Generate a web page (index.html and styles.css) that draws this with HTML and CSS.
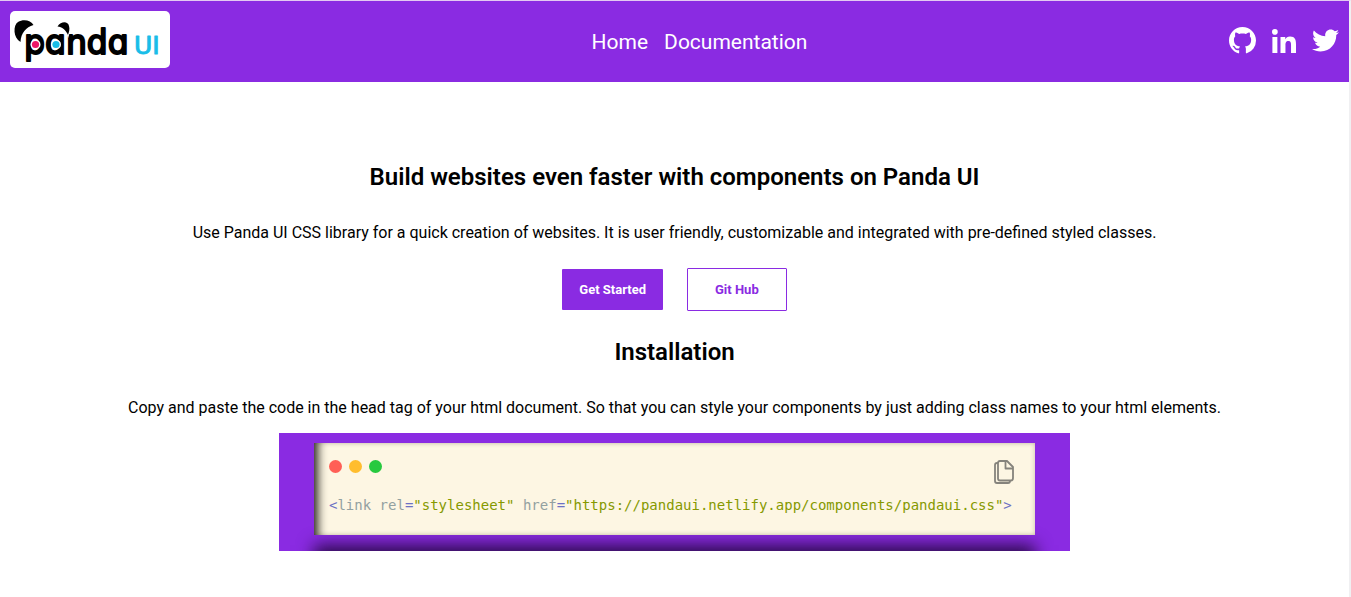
FILE: index.html
```html
<!DOCTYPE html>
<html lang="en">
<head>
<meta charset="utf-8">
<meta name="viewport" content="width=device-width, initial-scale=1">
<title>Panda UI</title>
<link rel="stylesheet" href="styles.css">
</head>
<body>
<header class="navbar">
  <a class="logo" href="#" aria-label="Panda UI">
    <svg class="logo-art" viewBox="0 0 160 57" aria-hidden="true">
      <text class="logo-word" x="14" y="43">pɑndɑ</text>
      <text class="logo-suffix" x="124" y="43">UI</text>
      <g stroke="#fff" stroke-width="2" paint-order="stroke">
        <path d="M10.500 31C3 27 3 14 8 11C13 8 21 9 23.500 14C16 16 11 22 10.500 31Z"/>
        <path d="M47.500 15.500C51 10 58 10 59 15C60 18 59 21 58 24C56 19 52 16 47.500 15.500Z"/>
      </g>
      <circle cx="25.500" cy="33.500" r="5" fill="#fff"/>
      <circle cx="25.500" cy="33.500" r="3.600" fill="#ed1566"/>
      <circle cx="46" cy="33.500" r="5" fill="#fff"/>
      <circle cx="46" cy="33.500" r="3.600" fill="#18bde8"/>
    </svg>
  </a>
  <nav class="nav-links">
    <a href="#">Home</a>
    <a href="#docs">Documentation</a>
  </nav>
  <div class="social">
    <a href="#github" aria-label="GitHub"><svg class="icon-github" viewBox="0 0 16 16"><path d="M8 0C3.580 0 0 3.580 0 8c0 3.540 2.290 6.530 5.470 7.590.4.070.55-.17.55-.38 0-.19-.01-.82-.01-1.490-2.010.37-2.530-.49-2.690-.94-.09-.23-.48-.94-.82-1.130-.28-.15-.68-.52-.01-.53.63-.01 1.080.58 1.230.82.72 1.210 1.870.87 2.330.66.07-.52.28-.87.51-1.070-1.780-.2-3.640-.89-3.640-3.950 0-.87.31-1.590.82-2.150-.08-.2-.36-1.020.08-2.120 0 0 .67-.21 2.200.82.640-.18 1.320-.27 2-.27s1.360.09 2 .27c1.530-1.040 2.200-.82 2.200-.82.44 1.100.16 1.920.08 2.120.51.56.82 1.270.82 2.150 0 3.070-1.870 3.750-3.650 3.950.29.25.54.73.54 1.480 0 1.070-.01 1.930-.01 2.200 0 .21.15.46.55.38A8.010 8.010 0 0 0 16 8c0-4.420-3.580-8-8-8z"/></svg></a>
    <a href="#linkedin" aria-label="LinkedIn"><svg class="icon-linkedin" viewBox="0 0 448 448"><path d="M100.280 448H7.400V148.900h92.880zM53.790 108.100C24.090 108.100 0 83.500 0 53.800a53.790 53.790 0 0 1 107.580 0c0 29.700-24.100 54.300-53.790 54.300zM447.900 448h-92.680V302.400c0-34.700-.7-79.200-48.290-79.200-48.290 0-55.690 37.700-55.690 76.700V448h-92.780V148.900h89.080v40.800h1.300c12.400-23.500 42.690-48.300 87.880-48.300 94 0 111.280 61.900 111.280 142.300V448z"/></svg></a>
    <a href="#twitter" aria-label="Twitter"><svg class="icon-twitter" viewBox="0 0 512 512"><path d="M459.370 151.716c.325 4.548.325 9.097.325 13.645 0 138.720-105.583 298.558-298.558 298.558-59.452 0-114.680-17.219-161.137-47.106 8.447.974 16.568 1.299 25.340 1.299 49.055 0 94.213-16.568 130.274-44.832-46.132-.975-84.792-31.188-98.112-72.772 6.498.974 12.995 1.624 19.818 1.624 9.421 0 18.843-1.300 27.614-3.573-48.081-9.747-84.143-51.980-84.143-102.985v-1.299c13.969 7.797 30.214 12.670 47.431 13.319-28.264-18.843-46.781-51.005-46.781-87.391 0-19.492 5.197-37.360 14.294-52.954 51.655 63.675 129.300 105.258 216.365 109.807-1.624-7.797-2.599-15.918-2.599-24.040 0-57.828 46.782-104.934 104.934-104.934 30.213 0 57.502 12.670 76.670 33.137 23.715-4.548 46.456-13.320 66.599-25.340-7.798 24.366-24.366 44.833-46.132 57.827 21.117-2.273 41.584-8.122 60.426-16.243-14.292 20.791-32.161 39.308-52.628 54.253z"/></svg></a>
  </div>
</header>
<main class="content">
  <h1 class="title">Build websites even faster with components on Panda UI</h1>
  <p class="text">Use Panda UI CSS library for a quick creation of websites. It is user friendly, customizable and integrated with pre-defined styled classes.</p>
  <div class="actions">
    <button class="btn btn-primary" type="button">Get Started</button>
    <button class="btn btn-outline" type="button">Git Hub</button>
  </div>
  <h2 class="title">Installation</h2>
  <p class="text">Copy and paste the code in the head tag of your html document. So that you can style your components by just adding class names to your html elements.</p>
  <div class="frame">
    <div class="window">
      <div class="window-bar">
        <div class="dots"><span class="dot red"></span><span class="dot yellow"></span><span class="dot green"></span></div>
        <button class="copy" type="button" aria-label="Copy code">
          <svg viewBox="0 0 20 24" width="20" height="24" fill="none" stroke="#85837c" stroke-width="1.800" stroke-linejoin="round"><path d="M4 3H3Q1 3 1 5V21Q1 23 3 23H14Q16 23 16 21"/><path d="M6 1H13L19 7V18Q19 20.500 17 20.500H6Q4 20.500 4 18.500V3Q4 1 6 1Z"/><path d="M11.500 1V8.500H19"/></svg>
        </button>
      </div>
      <pre class="code"><code><span class="punct">&lt;</span>link rel<span class="punct">=</span><span class="str">"stylesheet"</span> href<span class="punct">=</span><span class="str">"https://pandaui.netlify.app/components/pandaui.css"</span><span class="punct">&gt;</span></code></pre>
    </div>
  </div>
</main>
</body>
</html>
```
FILE: styles.css
```css
* { box-sizing: border-box; }
html { min-height: 100%; display: flex; flex-direction: column; }
body {
  margin: 0;
  flex: 1;
  font-family: Roboto, sans-serif;
  color: #000;
  background: #fff;
  border-top: 1px solid #e3c9f2;
  border-right: 2px solid #f0f0f2;
}
.navbar {
  display: flex;
  justify-content: space-between;
  align-items: center;
  padding: 10px 10px 14px;
  background: #8a2be2;
}
.logo {
  display: block;
  width: 160px;
  background: #fff;
  border-radius: 5px;
}
.logo-art { display: block; width: 100%; }
.logo-word {
  font: 33px "DejaVu Sans", sans-serif;
  fill: #000;
  stroke: #000;
  stroke-width: 2px;
  stroke-linejoin: round;
}
.logo-suffix {
  font: 25px "DejaVu Sans", sans-serif;
  fill: #18bde8;
  stroke: #18bde8;
  stroke-width: 1px;
  stroke-linejoin: round;
}
.nav-links { display: flex; gap: 16px; padding-top: 4px; }
.nav-links a { color: #fff; font-size: 21px; line-height: 26px; text-decoration: none; }
.social {
  display: flex;
  align-items: center;
  gap: 16px;
  padding-top: 2px;
}
.social svg { display: block; fill: #fff; }
.icon-github { width: 27px; height: 27px; }
.icon-linkedin { width: 24px; height: 24px; }
.icon-twitter { width: 27px; height: 27px; }
.content { padding: 80px 16px 0; text-align: center; }
.title { margin: 0; font-size: 24px; line-height: 30px; font-weight: 600; }
.text { margin: 30px 0 15px; padding-top: 1px; font-size: 16px; line-height: 20px; }
.actions {
  display: flex;
  justify-content: center;
  align-items: center;
  gap: 24px;
  margin: 25px 0 26px;
}
.btn {
  font-family: inherit;
  font-size: 13px;
  line-height: 16px;
  font-weight: 700;
  border-radius: 1px;
}
.btn-primary { padding: 13px 17px 12px; border: 0; color: #fff; background: #8a2be2; }
.btn-outline { padding: 13px 27px 12px; border: 1px solid #8a2be2; color: #8a2be2; background: #fff; }
.frame {
  max-width: 791px;
  margin: 0 auto;
  padding: 10px 35px 16px;
  overflow: hidden;
  background: #8a2be2;
}
.window {
  padding: 17px 15px 20px;
  text-align: left;
  background: #fdf6e3;
  box-shadow: inset 12px 0 10px -8px #2e2b24, inset 0 0 5px rgba(80, 70, 40, .3), 0 102px 16px #2c0b4b;
}
.window-bar { display: flex; justify-content: space-between; align-items: flex-start; }
.dots { display: flex; gap: 7px; }
.dot { width: 13px; height: 13px; border-radius: 50%; }
.red { background: #ff5f56; }
.yellow { background: #ffbd2e; }
.green { background: #27c93f; }
.copy { padding: 0; margin-right: 6px; border: 0; background: none; }
.copy svg { display: block; }
.code { margin: 11px 0 0; font: 14px/20px "DejaVu Sans Mono", monospace; color: #93a1a1; }
.code code { font: inherit; }
.punct { color: #6c71c4; }
.str { color: #859900; }
```
